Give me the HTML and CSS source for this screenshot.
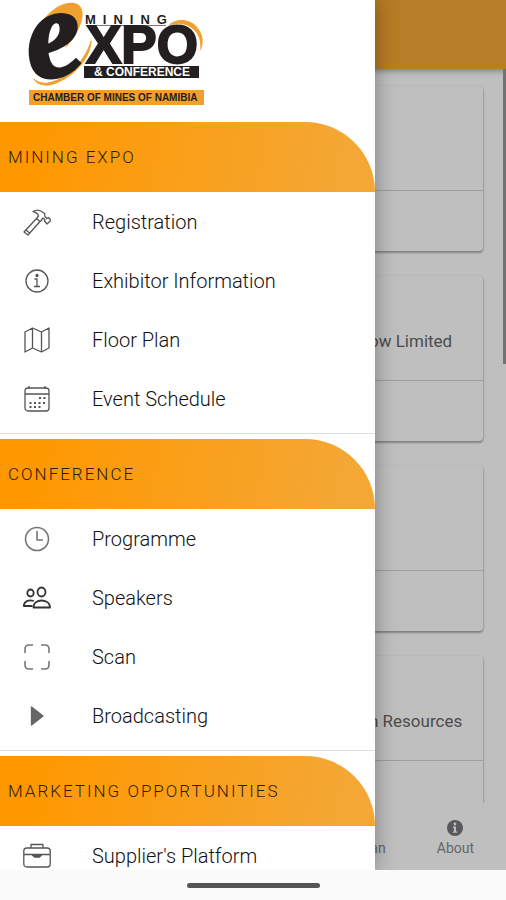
FILE: index.html
```html
<!DOCTYPE html>
<html lang="en">
<head>
<meta charset="utf-8">
<meta name="viewport" content="width=device-width, initial-scale=1">
<title>Mining Expo &amp; Conference</title>
<link rel="stylesheet" href="styles.css">
</head>
<body>
<div class="stage">
  <div class="page">
    <header class="toolbar"></header>
    <main class="feed">
      <article class="card"><div class="card-body"></div><div class="card-foot"></div></article>
      <article class="card"><div class="card-body">ow Limited</div><div class="card-foot"></div></article>
      <article class="card"><div class="card-body"></div><div class="card-foot"></div></article>
      <article class="card"><div class="card-body">n Resources</div><div class="card-foot"></div></article>
    </main>
    <nav class="tabs">
      <a class="tab tab-plan" href="#plan">Floor Plan</a>
      <a class="tab tab-about" href="#about">
        <svg width="16" height="16" viewBox="0 0 16 16"><circle cx="8" cy="8" r="8" fill="#77777a"/><circle cx="8" cy="4" r="1.4" fill="#fff"/><path d="M6 6.6h3v4.8h1.2v1.3H5.8v-1.3H7V7.9H6z" fill="#fff"/></svg>
        About
      </a>
    </nav>
    <div class="scroll-thumb"></div>
  </div>
  <div class="backdrop"></div>

  <aside class="drawer">
    <div class="brand">
      <svg class="logo" width="180" height="106" viewBox="26 0 180 106" role="img" aria-label="Mining Expo and Conference">
        <path d="M38 27C48 11 62 1 74 3c12 2 10 17 3 29-4 8-8 12-12 16 6-12 9-25 3-31-7-6-21-1-30 10z" fill="#f0a02c"/>
        <path d="M91 41c-5 18-22 38-43 42-6 1-11-1-14-4 3 6 13 8 22 4 18-7 34-24 35-42z" fill="#f0a02c" stroke="#f0a02c"/>
        <path d="M168 26c7-8 21-8 29 1 7 8 7 17 3 24 1-8 0-15-6-21-7-7-17-8-26-4z" fill="#f0a02c"/>
        <text class="logo-e" transform="translate(32 81) rotate(-11)">e</text>
        <text class="logo-mining" x="85" y="24">MINING</text>
        <path d="M86 25.500h80" stroke="#777" stroke-width="1"/>
        <text class="logo-xpo" x="86" y="63">XPO</text>
        <path d="M84 66h115v12H84z" fill="#231f20"/>
        <text class="logo-conf" x="94" y="76">&amp; CONFERENCE</text>
        <path d="M29 90h175v15H29z" fill="#f0a02c"/>
        <text class="logo-chamber" x="33" y="101">CHAMBER OF MINES OF NAMIBIA</text>
      </svg>
    </div>

    <section class="group">
      <h2 class="group-title">MINING EXPO</h2>
      <a class="item" href="#registration">
        <svg class="icon" viewBox="0 0 28 28"><path d="M1 24 13.500 10.500l3.500 3L5 27zM13.500 10.500l2-2.500c-1-3-3-4-5.500-4.500 4-2.500 8-1.500 11.500 2l.5 3 2 2 1.500-1 2.500 3-4 3.500-2.500-3 .5-1.500-2-1.500-2.500 3.500M3 22l3.500 3"/></svg>
        Registration</a>
      <a class="item" href="#exhibitors">
        <svg class="icon" viewBox="0 0 28 28"><circle cx="14" cy="14" r="11"/><path d="M11.500 12H14v7M11 19.500h6"/><circle cx="14" cy="8.500" r="1" fill="#555"/></svg>
        Exhibitor Information</a>
      <a class="item" href="#floor">
        <svg class="icon" viewBox="0 0 28 28"><path d="M2 6v20l7.500-4 9 4 7.500-4V2l-7.500 4-9-4zM9.500 2v20M18.500 6v20"/></svg>
        Floor Plan</a>
      <a class="item" href="#schedule">
        <svg class="icon" viewBox="0 0 28 28"><rect x="2" y="3" width="24" height="23" rx="3"/><path d="M2 9h24M6 1v3M22 1v3"/><path d="M16 13h2M20.500 13h2M6.500 18h2M11 18h2M15.500 18h2M20 18h2M6.500 22h2M11 22h2M15.500 22h2" stroke-width="2"/></svg>
        Event Schedule</a>
    </section>

    <section class="group">
      <h2 class="group-title">CONFERENCE</h2>
      <a class="item" href="#programme">
        <svg class="icon icon-soft" viewBox="0 0 28 28"><circle cx="14" cy="14" r="11.500"/><path d="M14 6v9h6"/></svg>
        Programme</a>
      <a class="item" href="#speakers">
        <svg class="icon icon-dark" viewBox="0 0 28 28"><ellipse cx="18.500" cy="8" rx="4" ry="4.500"/><path d="M10.500 23.500c0-5 4-7 8-7s8.500 2 8.500 7z"/><ellipse cx="7.500" cy="9" rx="3.200" ry="3.500"/><path d="M9.500 22H.8c0-5 5-6.500 10-5"/></svg>
        Speakers</a>
      <a class="item" href="#scan">
        <svg class="icon icon-soft" viewBox="0 0 28 28"><path d="M2 10V6q0-4 4-4h4M18 2h4q4 0 4 4v4M26 18v4q0 4-4 4h-4M10 26H6q-4 0-4-4v-4"/></svg>
        Scan</a>
      <a class="item" href="#broadcasting">
        <svg class="icon" viewBox="0 0 28 28"><path d="M8.500 5v18L20 14z" fill="#666" stroke="#666"/></svg>
        Broadcasting</a>
    </section>

    <section class="group">
      <h2 class="group-title">MARKETING OPPORTUNITIES</h2>
      <a class="item" href="#suppliers">
        <svg class="icon" viewBox="0 0 28 28"><rect x=".8" y="6" width="26.400" height="19" rx="3"/><path d="M8 6V2.500h12V6M1 12.500h26"/><path d="M9.500 13h9l-2 2h-5z" fill="#555"/></svg>
        Supplier's Platform</a>
    </section>
  </aside>
</div>
<footer class="system-bar"><span class="home-pill"></span></footer>
</body>
</html>
```

FILE: styles.css
```css
* {
  box-sizing: border-box;
}

body {
  margin: 0;
  height: 100vh;
  display: flex;
  flex-direction: column;
  font-family: Roboto, "Liberation Sans", sans-serif;
  background: #fafafa;
}

a {
  color: inherit;
  text-decoration: none;
}

.stage {
  position: relative;
  flex: 1;
  min-height: 0;
  overflow: hidden;
}

/* Page behind the menu */
.page {
  position: relative;
  height: 100%;
  display: flex;
  flex-direction: column;
  background: #fff;
}

.toolbar {
  flex: none;
  height: 69px;
  background: linear-gradient(90deg, #ff9800, #f4a734 80%);
  box-shadow: 0 2px 6px rgba(0, 0, 0, 0.35);
}

.feed {
  flex: 1;
  min-height: 0;
  overflow: hidden;
  display: flex;
  flex-direction: column;
  gap: 25px;
  padding: 17px 23px 0;
}

.card {
  flex: none;
  border-radius: 4px;
  box-shadow: 0 2px 2px rgba(0, 0, 0, 0.3), 1px 0 2px rgba(0, 0, 0, 0.1);
}

.card-body {
  height: 105px;
  padding: 53px 0 0 346px;
  border-bottom: 1px solid #d4d4d4;
  color: #666;
  font-size: 17px;
  line-height: 24px;
  white-space: nowrap;
}

.card-foot {
  height: 60px;
}

.tabs {
  flex: none;
  height: 67px;
  display: grid;
  grid-template-columns: repeat(5, 1fr);
  padding-bottom: 12px;
}

.tab {
  display: flex;
  flex-direction: column;
  align-items: center;
  justify-content: flex-end;
  gap: 2px;
  color: #8a8a8c;
  font-size: 14px;
  line-height: 20px;
  white-space: nowrap;
}

.tab-plan {
  grid-column: 4;
}

.tab-about {
  grid-column: 5;
}

.scroll-thumb {
  position: absolute;
  top: 69px;
  right: 0;
  width: 3px;
  height: 295px;
  background: #999;
}

.backdrop {
  position: absolute;
  inset: 0;
  background: rgba(0, 0, 0, 0.25);
}

/* Side menu */
.drawer {
  position: absolute;
  top: 0;
  bottom: 0;
  left: 0;
  width: 375px;
  max-width: 85%;
  overflow: hidden;
  background: #fff;
  box-shadow: 0 0 20px rgba(0, 0, 0, 0.35);
}

.brand {
  height: 122px;
  padding-left: 26px;
}

.logo {
  display: block;
}

.logo text {
  font-family: "Liberation Sans", sans-serif;
  font-weight: bold;
  fill: #231f20;
}

.logo .logo-e {
  font-family: "Liberation Serif", serif;
  font-style: italic;
  font-size: 128px;
  stroke: #231f20;
  stroke-width: 3px;
}

.logo .logo-mining {
  font-size: 13px;
  letter-spacing: 7px;
}

.logo .logo-xpo {
  font-size: 53px;
  stroke: #231f20;
  stroke-width: 2px;
}

.logo .logo-conf {
  font-size: 12px;
  fill: #fff;
}

.logo .logo-chamber {
  font-size: 10px;
}

.group {
  padding-bottom: 5px;
  margin-bottom: 5px;
  border-bottom: 1px solid #dedede;
}

.group-title {
  display: flex;
  align-items: center;
  height: 70px;
  margin: 0;
  padding-left: 8px;
  border-top-right-radius: 70px;
  background: linear-gradient(100deg, #ff9800 10%, #f4a734 90%);
  color: #2b1c05;
  font-size: 17px;
  font-weight: 300;
  letter-spacing: 2px;
}

.item {
  display: flex;
  align-items: center;
  gap: 41px;
  height: 59px;
  padding-left: 23px;
  color: #111;
  font-size: 20px;
  font-weight: 300;
}

.icon {
  flex: none;
  width: 28px;
  height: 28px;
  fill: none;
  stroke: #555;
  stroke-width: 1.3;
  stroke-linejoin: round;
}

.icon-soft {
  stroke: #777;
  stroke-width: 1.6;
}

.icon-dark {
  stroke: #333;
  stroke-width: 1.8;
}

/* Gesture bar */
.system-bar {
  flex: none;
  height: 30px;
  display: flex;
  align-items: center;
  justify-content: center;
  background: #fafafa;
}

.home-pill {
  width: 133px;
  height: 5px;
  border-radius: 3px;
  background: #555;
}
```
